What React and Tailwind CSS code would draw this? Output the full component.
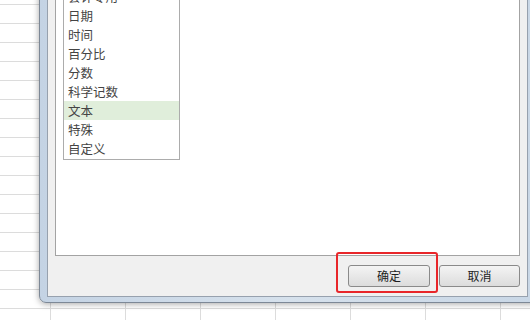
import React from "react";

const items = ["常规", "数值", "货币", "会计专用", "日期", "时间", "百分比", "分数", "科学记数", "文本", "特殊", "自定义"];

export default function App() {
  const cells = Array.from({ length: 9 * 18 });
  return (
    <div
      className="relative w-[530px] h-[320px] overflow-hidden bg-white"
      style={{ fontFamily: '"Noto Sans CJK SC", "Noto Sans", sans-serif' }}
    >
      <div className="absolute inset-0 overflow-hidden">
        <div className="grid grid-cols-[repeat(9,75px)] auto-rows-[19px] ml-[-24px] mt-[-14px]">
          {cells.map((_, i) => (
            <div key={i} className="border-r border-b border-[#dcdcdc]" />
          ))}
        </div>
      </div>

      <div className="absolute left-[39px] top-[-10px] right-[-8px] bottom-[17px] flex flex-col border border-[#7d8896] rounded-bl-[7px] bg-gradient-to-r from-[#c4d3e4] via-[#d6e1ec] to-[#c9d7e6] pl-[7px] pr-[9px] pb-[5px] shadow-[0_1px_6px_rgba(0,0,0,0.35)]">
        <div className="flex-1 min-h-0 flex flex-col bg-[#f0f0f0] border border-[#97a1ae] pl-[7px] pr-[7px] pb-[9px]">
          <div className="flex-1 min-h-0 flex flex-col justify-end overflow-hidden bg-white border border-[#a3a3a3] pl-[7px] pb-[95px]">
            <div className="w-[117px] border border-[#acacac] bg-white pb-[1px]">
              {items.map((t) => (
                <div
                  key={t}
                  className={`h-[19px] leading-[19px] pl-[4px] text-[12.5px] text-[#444] ${t === "文本" ? "bg-[#e0eedb]" : ""}`}
                >
                  {t}
                </div>
              ))}
            </div>
          </div>
          <div className="mt-[9px] flex justify-end gap-[9px]">
            <div className="relative">
              <div className="absolute left-[-12px] top-[-13px] right-[-8px] bottom-[-6px] border-2 border-[#e8262a] rounded-[3px]" />
              <div className="w-[82px] h-[22px] flex items-center justify-center rounded-[3px] border border-[#8a8a8a] bg-gradient-to-b from-[#f4f4f4] to-[#dcdcdc] text-[12px] text-[#1e1e1e]">
                确定
              </div>
            </div>
            <div className="w-[81px] h-[22px] flex items-center justify-center rounded-[3px] border border-[#8a8a8a] bg-gradient-to-b from-[#f4f4f4] to-[#dcdcdc] text-[12px] text-[#1e1e1e]">
              取消
            </div>
          </div>
        </div>
      </div>
    </div>
  );
}
